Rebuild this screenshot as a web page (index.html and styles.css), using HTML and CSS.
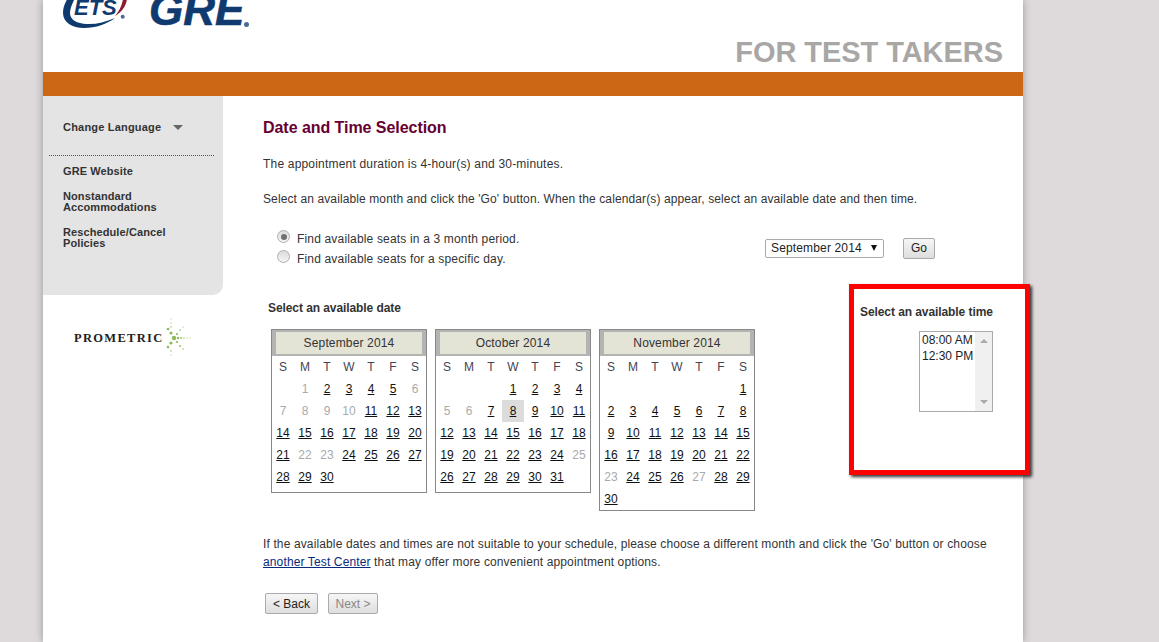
FILE: index.html
```html
<!DOCTYPE html>
<html lang="en">
<head>
    <meta charset="UTF-8">
    <title>Date and Time Selection</title>
    <link rel="stylesheet" href="styles.css">
</head>
<body>
    <div class="page">
        <div class="page-header">
            <div class="logos">
                <svg class="ets-logo" width="68" height="30" viewBox="0 0 68 30">
                    <path fill="#0f3a70" d="M5 -2C1 4 0 9 0 13C0 22 9 28 21 28C33 28 44 24 52 18C42 22 33 24.500 24 24C14 23.500 7 20 7 13C7 9 9 4 12 -2Z"/>
                    <path fill="#8c1c2e" d="M60 -1L64 -1C63 6 59 12 52 16C56 11 59 6 60 -1Z"/>
                    <circle cx="59.700" cy="16.700" r="2" fill="#4a6a94"/>
                    <text class="ets-text" x="11" y="15">ETS</text>
                </svg>
                <span class="gre-logo">GRE</span>
                <span class="gre-dot"></span>
            </div>
            <div class="tagline">FOR TEST TAKERS</div>
        </div>
        <div class="orange-bar"></div>
        <div class="page-body">
            <div class="left-col">
                <div class="sidebar">
                    <div class="sidebar-lang">Change Language <span class="lang-arrow"></span></div>
                    <div class="sidebar-links">
                        <a href="#">GRE Website</a>
                        <a href="#">Nonstandard Accommodations</a>
                        <a href="#">Reschedule/Cancel Policies</a>
                    </div>
                </div>
                <div class="prometric">
                    <span class="prometric-name">PROMETRIC</span>
                    <svg width="30" height="44" viewBox="0 0 30 44">
                        <g fill="#8dbb5a">
                            <circle cx="11" cy="22" r="2.200"/>
                            <circle cx="8" cy="17" r="1.600"/>
                            <circle cx="8" cy="27" r="1.600"/>
                            <circle cx="5" cy="13" r="1.300"/>
                            <circle cx="5" cy="31" r="1.300"/>
                            <circle cx="15" cy="22" r="1.200"/>
                            <circle cx="18" cy="22" r="0.900"/>
                            <circle cx="21" cy="22" r="0.700"/>
                            <circle cx="24" cy="22" r="0.600"/>
                            <circle cx="27" cy="22" r="0.500"/>
                            <circle cx="14" cy="18" r="1.100"/>
                            <circle cx="17" cy="14" r="0.800"/>
                            <circle cx="14" cy="26" r="1.100"/>
                            <circle cx="17" cy="30" r="0.900"/>
                            <circle cx="20" cy="33" r="0.700"/>
                            <circle cx="20" cy="11" r="0.600"/>
                            <circle cx="8" cy="11" r="0.700"/>
                            <circle cx="8" cy="7" r="0.600"/>
                            <circle cx="8" cy="3" r="0.500"/>
                            <circle cx="8" cy="35" r="0.700"/>
                            <circle cx="8" cy="39" r="0.500"/>
                        </g>
                    </svg>
                </div>
            </div>
            <div class="main">
                <h1>Date and Time Selection</h1>
                <p class="intro duration">The appointment duration is 4-hour(s) and 30-minutes.</p>
                <p class="intro">Select an available month and click the 'Go' button. When the calendar(s) appear, select an available date and then time.</p>

                <div class="options">
                    <div class="radios">
                        <label><input type="radio" name="period" checked> Find available seats in a 3 month period.</label>
                        <label><input type="radio" name="period"> Find available seats for a specific day.</label>
                    </div>
                    <div class="month-select">
                        <select>
                            <option>September 2014</option>
                        </select>
                        <span class="select-arrow"></span>
                    </div>
                    <button class="btn go-btn">Go</button>
                </div>

                <div class="picker">
                    <div class="dates">
                        <div class="picker-label">Select an available date</div>
                        <div class="calendars">
                            <div class="cal">
                                <table>
                                    <tr><th class="month" colspan="7"><span>September 2014</span></th></tr>
                                    <tr class="days"><td>S</td><td>M</td><td>T</td><td>W</td><td>T</td><td>F</td><td>S</td></tr>
                                    <tr><td></td><td class="off">1</td><td><a href="#">2</a></td><td><a href="#">3</a></td><td><a href="#">4</a></td><td><a href="#">5</a></td><td class="off">6</td></tr>
                                    <tr><td class="off">7</td><td class="off">8</td><td class="off">9</td><td class="off">10</td><td><a href="#">11</a></td><td><a href="#">12</a></td><td><a href="#">13</a></td></tr>
                                    <tr><td><a href="#">14</a></td><td><a href="#">15</a></td><td><a href="#">16</a></td><td><a href="#">17</a></td><td><a href="#">18</a></td><td><a href="#">19</a></td><td><a href="#">20</a></td></tr>
                                    <tr><td><a href="#">21</a></td><td class="off">22</td><td class="off">23</td><td><a href="#">24</a></td><td><a href="#">25</a></td><td><a href="#">26</a></td><td><a href="#">27</a></td></tr>
                                    <tr><td><a href="#">28</a></td><td><a href="#">29</a></td><td><a href="#">30</a></td><td></td><td></td><td></td><td></td></tr>
                                </table>
                            </div>
                            <div class="cal">
                                <table>
                                    <tr><th class="month" colspan="7"><span>October 2014</span></th></tr>
                                    <tr class="days"><td>S</td><td>M</td><td>T</td><td>W</td><td>T</td><td>F</td><td>S</td></tr>
                                    <tr><td></td><td></td><td></td><td><a href="#">1</a></td><td><a href="#">2</a></td><td><a href="#">3</a></td><td><a href="#">4</a></td></tr>
                                    <tr><td class="off">5</td><td class="off">6</td><td><a href="#">7</a></td><td class="selected"><a href="#">8</a></td><td><a href="#">9</a></td><td><a href="#">10</a></td><td><a href="#">11</a></td></tr>
                                    <tr><td><a href="#">12</a></td><td><a href="#">13</a></td><td><a href="#">14</a></td><td><a href="#">15</a></td><td><a href="#">16</a></td><td><a href="#">17</a></td><td><a href="#">18</a></td></tr>
                                    <tr><td><a href="#">19</a></td><td><a href="#">20</a></td><td><a href="#">21</a></td><td><a href="#">22</a></td><td><a href="#">23</a></td><td><a href="#">24</a></td><td class="off">25</td></tr>
                                    <tr><td><a href="#">26</a></td><td><a href="#">27</a></td><td><a href="#">28</a></td><td><a href="#">29</a></td><td><a href="#">30</a></td><td><a href="#">31</a></td><td></td></tr>
                                </table>
                            </div>
                            <div class="cal">
                                <table>
                                    <tr><th class="month" colspan="7"><span>November 2014</span></th></tr>
                                    <tr class="days"><td>S</td><td>M</td><td>T</td><td>W</td><td>T</td><td>F</td><td>S</td></tr>
                                    <tr><td></td><td></td><td></td><td></td><td></td><td></td><td><a href="#">1</a></td></tr>
                                    <tr><td><a href="#">2</a></td><td><a href="#">3</a></td><td><a href="#">4</a></td><td><a href="#">5</a></td><td><a href="#">6</a></td><td><a href="#">7</a></td><td><a href="#">8</a></td></tr>
                                    <tr><td><a href="#">9</a></td><td><a href="#">10</a></td><td><a href="#">11</a></td><td><a href="#">12</a></td><td><a href="#">13</a></td><td><a href="#">14</a></td><td><a href="#">15</a></td></tr>
                                    <tr><td><a href="#">16</a></td><td><a href="#">17</a></td><td><a href="#">18</a></td><td><a href="#">19</a></td><td><a href="#">20</a></td><td><a href="#">21</a></td><td><a href="#">22</a></td></tr>
                                    <tr><td class="off">23</td><td><a href="#">24</a></td><td><a href="#">25</a></td><td><a href="#">26</a></td><td class="off">27</td><td><a href="#">28</a></td><td><a href="#">29</a></td></tr>
                                    <tr><td><a href="#">30</a></td><td></td><td></td><td></td><td></td><td></td><td></td></tr>
                                </table>
                            </div>
                        </div>
                    </div>
                    <div class="time-box">
                        <div class="picker-label">Select an available time</div>
                        <div class="time-list">
                            <div class="time-options">
                                <div>08:00 AM</div>
                                <div>12:30 PM</div>
                            </div>
                            <div class="time-scroll">
                                <span class="scroll-up"></span>
                                <span class="scroll-down"></span>
                            </div>
                        </div>
                    </div>
                </div>

                <p class="note">If the available dates and times are not suitable to your schedule, please choose a different month and click the 'Go' button or choose <a href="#">another Test Center</a> that may offer more convenient appointment options.</p>

                <div class="nav-buttons">
                    <button class="btn back-btn">&lt; Back</button>
                    <button class="btn next-btn" disabled>Next &gt;</button>
                </div>
            </div>
        </div>
    </div>
</body>
</html>
```

FILE: styles.css
```css
* {
    margin: 0;
    padding: 0;
    box-sizing: border-box;
}

html, body {
    height: 642px;
    overflow: hidden;
}

body {
    font-family: "Liberation Sans", Arial, sans-serif;
    font-size: 12px;
    color: #333;
    background: #ded9da;
}

.page {
    width: 980px;
    height: 642px;
    margin-left: 43px;
    background: #fff;
    box-shadow: 0 0 8px rgba(0,0,0,0.3);
}

.page-header {
    height: 72px;
    display: flex;
    justify-content: space-between;
    padding: 0 20px;
}

.logos {
    display: flex;
    align-items: flex-start;
    height: 27px;
}

.ets-logo {
    overflow: hidden;
}

.ets-text {
    font-family: "Liberation Sans", Arial, sans-serif;
    font-size: 22px;
    font-weight: bold;
    font-style: italic;
    fill: #0f3a70;
}

.gre-logo {
    margin: -15px 0 0 18px;
    font-size: 44px;
    line-height: 50px;
    font-weight: bold;
    font-style: italic;
    color: #0f3a70;
    -webkit-text-stroke: 0.6px #0f3a70;
}

.gre-dot {
    width: 5px;
    height: 5px;
    margin: 22px 0 0 0;
    border-radius: 50%;
    background: #4a6a94;
}

.tagline {
    align-self: flex-end;
    font-size: 29px;
    line-height: 40px;
    font-weight: bold;
    letter-spacing: -0.05px;
    color: #a9a6a6;
}

.orange-bar {
    height: 24px;
    background: #cb6715;
}

.page-body {
    display: flex;
}

.left-col {
    width: 180px;
    flex-shrink: 0;
}

.sidebar {
    height: 199px;
    padding: 24px 9px 0 6px;
    background: #e4e4e4;
    border-bottom-right-radius: 10px;
    font-size: 11px;
    font-weight: bold;
}

.sidebar-lang {
    height: 36px;
    padding-left: 14px;
    line-height: 14px;
    letter-spacing: 0.2px;
    border-bottom: 1px dotted #555;
}

.lang-arrow {
    display: inline-block;
    margin-left: 8px;
    border-left: 5px solid transparent;
    border-right: 5px solid transparent;
    border-top: 5px solid #666;
    vertical-align: 1px;
}

.sidebar-links {
    padding: 10px 14px 0;
}

.sidebar-links a {
    display: block;
    margin-bottom: 14px;
    line-height: 11px;
    letter-spacing: 0.1px;
    color: #333;
    text-decoration: none;
}

.prometric {
    display: flex;
    align-items: center;
    margin: 21px 0 0 31px;
}

.prometric-name {
    font-family: "Liberation Serif", serif;
    font-size: 12.500px;
    font-weight: bold;
    letter-spacing: 1.300px;
    color: #222;
}

.main {
    flex: 1;
    padding: 22px 0 0 40px;
}

h1 {
    font-size: 16px;
    line-height: 20px;
    letter-spacing: -0.05px;
    color: #660033;
}

.intro {
    margin-top: 17px;
    line-height: 18px;
    letter-spacing: 0.11px;
}

.intro.duration {
    letter-spacing: 0.19px;
}

.options {
    display: flex;
    align-items: center;
    height: 40px;
    margin: 20px 88px 0 0;
}

.radios {
    flex: 1;
    padding-left: 14px;
    letter-spacing: 0.17px;
}

.radios label {
    display: flex;
    align-items: center;
    gap: 7px;
    height: 20px;
    padding-top: 1px;
}

.radios input {
    appearance: none;
    position: relative;
    width: 13px;
    height: 13px;
    margin-top: -4px;
    border: 1px solid #b0b0b0;
    border-radius: 50%;
    background: linear-gradient(#dcdcdc, #f4f4f4);
}

.radios input:checked::after {
    content: "";
    position: absolute;
    left: 2.500px;
    top: 2.500px;
    width: 6px;
    height: 6px;
    border-radius: 50%;
    background: #707070;
}

.month-select {
    position: relative;
    width: 119px;
    height: 19px;
    margin-right: 19px;
}

.month-select select {
    appearance: none;
    width: 100%;
    height: 100%;
    padding-left: 5px;
    border: 1px solid #aaa;
    border-radius: 2px;
    background: #fff;
    font: 12px "Liberation Sans", Arial, sans-serif;
    letter-spacing: 0.15px;
    color: #222;
}

.select-arrow {
    position: absolute;
    right: 7px;
    top: 6px;
    border-left: 3.500px solid transparent;
    border-right: 3.500px solid transparent;
    border-top: 6px solid #111;
}

.btn {
    height: 21px;
    padding: 0;
    border: 1px solid #aaa;
    border-radius: 2px;
    background: linear-gradient(#f6f6f6, #dedede);
    font: 12px "Liberation Sans", Arial, sans-serif;
    color: #222;
}

.btn:disabled {
    color: #888;
}

.go-btn {
    width: 32px;
}

.back-btn {
    width: 53px;
}

.next-btn {
    width: 50px;
}

.picker {
    display: flex;
    justify-content: space-between;
    height: 227px;
    margin: 16px -7px 0 0;
}

.dates {
    padding-top: 15px;
}

.picker-label {
    line-height: 18px;
    font-weight: bold;
    letter-spacing: -0.08px;
}

.dates .picker-label {
    margin-left: 5px;
}

.calendars {
    display: flex;
    align-items: flex-start;
    gap: 8px;
    margin: 12px 0 0 8px;
}

.cal {
    width: 156px;
    min-height: 164px;
    border: 1px solid #888;
}

.cal table {
    width: 154px;
    border-spacing: 0;
    table-layout: fixed;
    text-align: center;
}

.cal td {
    width: 22px;
    height: 22px;
    padding: 0;
}

.month {
    height: 26px;
    padding: 2px 4px;
    background: #b3b3b3;
    font-weight: normal;
    letter-spacing: 0.15px;
}

.month span {
    display: block;
    height: 22px;
    line-height: 22px;
    background: #e3e3d6;
}

.days td {
    color: #445;
}

.cal a {
    color: #111;
}

.cal .off {
    color: #aaa;
}

.cal .selected {
    background: #dcdcdc;
}

.time-box {
    width: 181px;
    height: 191px;
    padding: 14px 0 0 6px;
    border: 5px solid #f00;
    box-shadow: 2px 2px 3px #333;
    background: #fff;
}

.time-list {
    display: flex;
    width: 74px;
    height: 81px;
    margin: 10px 0 0 59px;
    border: 1px solid #aaa;
}

.time-options {
    flex: 1;
    padding-left: 2px;
    line-height: 16px;
    color: #222;
}

.time-scroll {
    display: flex;
    flex-direction: column;
    justify-content: space-between;
    align-items: center;
    width: 17px;
    padding: 7px 0;
    background: #f0f0f0;
}

.scroll-up {
    border-left: 4px solid transparent;
    border-right: 4px solid transparent;
    border-bottom: 4px solid #aaa;
}

.scroll-down {
    border-left: 4px solid transparent;
    border-right: 4px solid transparent;
    border-top: 4px solid #aaa;
}

.note {
    max-width: 730px;
    margin-top: 24px;
    line-height: 18px;
    letter-spacing: 0.13px;
}

.note a {
    color: #0a2a7a;
}

.nav-buttons {
    display: flex;
    gap: 10px;
    margin: 22px 0 0 2px;
}
```
